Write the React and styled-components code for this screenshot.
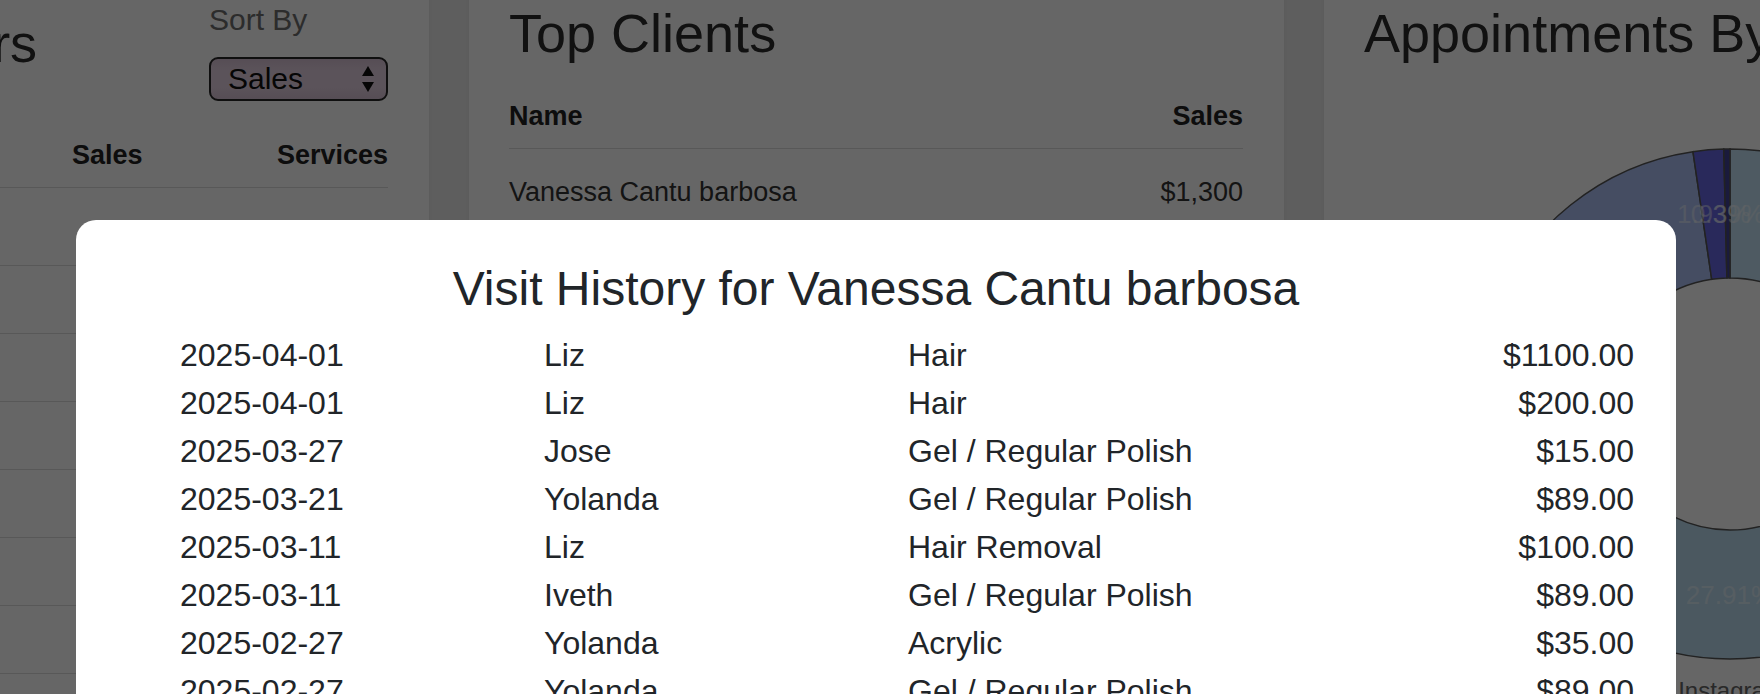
import React from 'react';
import styled, { createGlobalStyle } from 'styled-components';

const GlobalStyle = createGlobalStyle`
  html, body {
    margin: 0;
    padding: 0;
  }
  body {
    width: 1760px;
    height: 694px;
    overflow: hidden;
    background: #ececec;
    font-family: "Liberation Sans", Arial, Helvetica, sans-serif;
    color: #333;
  }
`;

const Dashboard = styled.div`
  display: flex;
  gap: 40px;
  margin: -30px 0 0 -386px;
`;

const Card = styled.section`
  flex: 0 0 815px;
  box-sizing: border-box;
  min-height: 820px;
  padding: 31px 41px 40px 40px;
  background: #fff;
  box-shadow: 0 1px 6px rgba(0, 0, 0, 0.06);
`;

const CardHead = styled.div`
  display: flex;
  justify-content: space-between;
  align-items: flex-start;
`;

const CardTitle = styled.h2`
  margin: ${p => p.$offset || 0}px 0 0;
  padding-left: ${p => p.$indent || 0}px;
  font-size: 54px;
  font-weight: 400;
  line-height: 1.2;
  color: #2b2b2b;
  white-space: nowrap;
`;

const SortBlock = styled.div`
  display: flex;
  flex-direction: column;
  width: 179px;
`;

const SortLabel = styled.span`
  margin-top: 1px;
  font-size: 30px;
  line-height: 36px;
  color: #6e6e6e;
`;

const SelectBox = styled.div`
  margin-top: 19px;
  box-sizing: border-box;
  width: 179px;
  height: 44px;
  display: flex;
  align-items: center;
  justify-content: space-between;
  padding: 0 11px 0 17px;
  border: 2px solid #262626;
  border-radius: 9px;
  background: linear-gradient(#d8c2d5, #e4d0e1 30%, #e4d0e1 70%, #d8c2d5);
  font-size: 30px;
  color: #111;
`;

const TableHead = styled.div`
  display: grid;
  grid-template-columns: ${p => p.$cols};
  margin-top: ${p => p.$top}px;
  padding: 16px 0;
  border-bottom: 1px solid #dcdcdc;
  font-size: 27px;
  font-weight: 700;
  line-height: 1.2;
  color: #222;
`;

const TableRow = styled.div`
  display: grid;
  grid-template-columns: ${p => p.$cols};
  padding: ${p => p.$pad};
  border-bottom: 1px solid #dcdcdc;
  font-size: 27px;
  line-height: 1.2;
  color: #333;
`;

const Right = styled.span`
  text-align: right;
`;

const ChartBox = styled.div`
  margin-top: 78px;
`;

const Legend = styled.div`
  display: flex;
  gap: 20px;
  margin-top: 9px;
  padding-left: 115px;
  font-size: 24px;
  line-height: 1.2;
  color: #666;
  white-space: nowrap;
`;

const LegendItem = styled.div`
  display: flex;
  align-items: center;
  gap: 10px;
`;

const Swatch = styled.span`
  width: 40px;
  height: 22px;
  box-sizing: border-box;
  background: ${p => p.$color};
  border: 1.5px solid #555;
`;

const Overlay = styled.div`
  position: fixed;
  inset: 0;
  box-sizing: border-box;
  padding: 220px 0 0 76px;
  background: rgba(0, 0, 0, 0.6);
  overflow: hidden;
`;

const Modal = styled.div`
  width: 1600px;
  box-sizing: border-box;
  padding: 40px 0 40px;
  background: #fff;
  border-radius: 20px;
  color: #212529;
`;

const ModalTitle = styled.h2`
  margin: 0 0 13px;
  font-size: 48px;
  font-weight: 400;
  line-height: 1.2;
  text-align: center;
`;

const VisitList = styled.div`
  padding: 0 42px 0 104px;
`;

const VisitRow = styled.div`
  display: grid;
  grid-template-columns: 364px 364px 1fr auto;
  font-size: 32px;
  line-height: 48px;
`;

const staff = [
  ['Yolanda', '$4,120', 58],
  ['Liz', '$3,870', 41],
  ['Iveth', '$2,935', 47],
  ['Jose', '$2,410', 36],
  ['Karla', '$1,980', 29],
  ['Diana', '$1,560', 22],
  ['Maria', '$1,215', 18],
];

const clients = [
  ['Vanessa Cantu barbosa', '$1,300'],
  ['Ana Gutierrez', '$845'],
  ['Leticia Ramos', '$610'],
  ['Brenda Salinas', '$540'],
];

const slices = [
  { name: 'Walk-in', value: 36.05, color: '#c4e2f6' },
  { name: 'Instagram', value: 27.91, color: '#bcdcf0' },
  { name: 'Referral', value: 33.72, color: '#acc0f5' },
  { name: 'Facebook', value: 1.93, color: '#6868e4' },
  { name: 'Google', value: 0.39, color: '#424296' },
];

const visits = [
  ['2025-04-01', 'Liz', 'Hair', '$1100.00'],
  ['2025-04-01', 'Liz', 'Hair', '$200.00'],
  ['2025-03-27', 'Jose', 'Gel / Regular Polish', '$15.00'],
  ['2025-03-21', 'Yolanda', 'Gel / Regular Polish', '$89.00'],
  ['2025-03-11', 'Liz', 'Hair Removal', '$100.00'],
  ['2025-03-11', 'Iveth', 'Gel / Regular Polish', '$89.00'],
  ['2025-02-27', 'Yolanda', 'Acrylic', '$35.00'],
  ['2025-02-27', 'Yolanda', 'Gel / Regular Polish', '$89.00'],
  ['2025-02-12', 'Liz', 'Hair', '$120.00'],
  ['2025-01-30', 'Iveth', 'Acrylic', '$45.00'],
];

const polar = (cx, cy, r, deg) => {
  const a = ((deg - 90) * Math.PI) / 180;
  return [cx + r * Math.cos(a), cy + r * Math.sin(a)];
};

const ringPath = (cx, cy, r0, r1, a0, a1) => {
  const large = a1 - a0 > 180 ? 1 : 0;
  const [x0, y0] = polar(cx, cy, r1, a0);
  const [x1, y1] = polar(cx, cy, r1, a1);
  const [x2, y2] = polar(cx, cy, r0, a1);
  const [x3, y3] = polar(cx, cy, r0, a0);
  return `M${x0} ${y0} A${r1} ${r1} 0 ${large} 1 ${x1} ${y1} L${x2} ${y2} A${r0} ${r0} 0 ${large} 0 ${x3} ${y3} Z`;
};

function SortArrows() {
  return (
    <svg width="14" height="28" viewBox="0 0 14 28">
      <path d="M7 1 L13 11 L1 11 Z" fill="#111" />
      <path d="M7 27 L13 17 L1 17 Z" fill="#111" />
    </svg>
  );
}

function Donut() {
  const cx = 366;
  const cy = 260;
  const r0 = 126;
  const r1 = 255;
  let start = 0;
  const parts = slices.map(s => {
    const sweep = (s.value / 100) * 360;
    const part = { ...s, a0: start, a1: start + sweep };
    start += sweep;
    return part;
  });

  return (
    <svg width="735" height="520" viewBox="0 0 735 520">
      {parts.map(p => (
        <path
          key={p.name}
          d={ringPath(cx, cy, r0, r1, p.a0, p.a1)}
          fill={p.color}
          stroke="#555"
          strokeWidth="1.5"
        />
      ))}
      {parts.map(p => {
        const [x, y] = polar(cx, cy, (r0 + r1) / 2, (p.a0 + p.a1) / 2);
        return (
          <text
            key={p.name + '-label'}
            x={x}
            y={y + 9}
            textAnchor="middle"
            fontSize="26"
            fontFamily="Liberation Sans, Arial, sans-serif"
            fill="#f4f8fb"
            fillOpacity="0.5"
          >
            {p.value.toFixed(2)}%
          </text>
        );
      })}
    </svg>
  );
}

export default function App() {
  return (
    <>
      <GlobalStyle />
      <Dashboard>
        <Card>
          <CardHead>
            <CardTitle $offset={10} $indent={14}>Top Performers</CardTitle>
            <SortBlock>
              <SortLabel>Sort By</SortLabel>
              <SelectBox>
                <span>Sales</span>
                <SortArrows />
              </SelectBox>
            </SortBlock>
          </CardHead>
          <TableHead $cols="418px 160px 1fr" $top={22}>
            <span>Name</span>
            <span>Sales</span>
            <Right>Services</Right>
          </TableHead>
          {staff.map(([name, sales, count], i) => (
            <TableRow
              key={name}
              $cols="418px 160px 1fr"
              $pad={i === 0 ? '27px 0 17.6px' : '17.3px 0'}
            >
              <span>{name}</span>
              <Right>{sales}</Right>
              <Right>{count}</Right>
            </TableRow>
          ))}
        </Card>

        <Card>
          <CardTitle>Top Clients</CardTitle>
          <TableHead $cols="1fr auto" $top={18}>
            <span>Name</span>
            <Right>Sales</Right>
          </TableHead>
          {clients.map(([name, sales]) => (
            <TableRow key={name} $cols="1fr auto" $pad="27px 0">
              <span>{name}</span>
              <Right>{sales}</Right>
            </TableRow>
          ))}
        </Card>

        <Card>
          <CardTitle>Appointments By Source</CardTitle>
          <ChartBox>
            <Donut />
          </ChartBox>
          <Legend>
            {slices.map(s => (
              <LegendItem key={s.name}>
                <Swatch $color={s.color} />
                <span>{s.name}</span>
              </LegendItem>
            ))}
          </Legend>
        </Card>
      </Dashboard>

      <Overlay>
        <Modal>
          <ModalTitle>Visit History for Vanessa Cantu barbosa</ModalTitle>
          <VisitList>
            {visits.map(([date, stylist, service, price], i) => (
              <VisitRow key={i}>
                <span>{date}</span>
                <span>{stylist}</span>
                <span>{service}</span>
                <Right>{price}</Right>
              </VisitRow>
            ))}
          </VisitList>
        </Modal>
      </Overlay>
    </>
  );
}
